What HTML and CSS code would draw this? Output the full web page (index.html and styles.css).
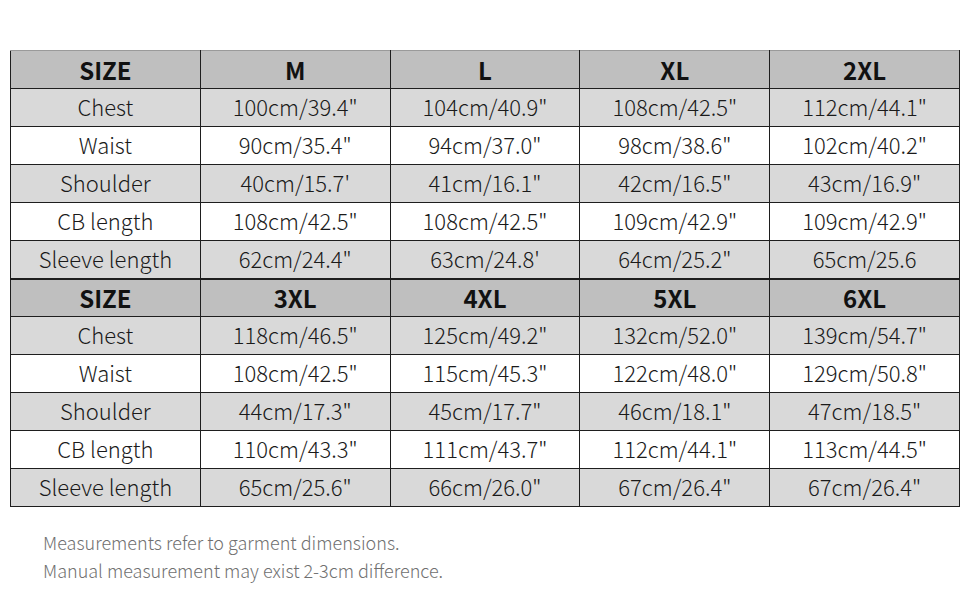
FILE: index.html
```html
<!DOCTYPE html>
<html>
<head>
<meta charset="utf-8">
<link rel="stylesheet" href="styles.css">
</head>
<body>
<div class="page">
<table class="size-table">
<tbody>
<tr class="head"><td>SIZE</td><td>M</td><td>L</td><td>XL</td><td>2XL</td></tr>
<tr class="shade"><td>Chest</td><td>100cm/39.4"</td><td>104cm/40.9"</td><td>108cm/42.5"</td><td>112cm/44.1"</td></tr>
<tr><td>Waist</td><td>90cm/35.4"</td><td>94cm/37.0"</td><td>98cm/38.6"</td><td>102cm/40.2"</td></tr>
<tr class="shade"><td>Shoulder</td><td>40cm/15.7'</td><td>41cm/16.1"</td><td>42cm/16.5"</td><td>43cm/16.9"</td></tr>
<tr><td>CB length</td><td>108cm/42.5"</td><td>108cm/42.5"</td><td>109cm/42.9"</td><td>109cm/42.9"</td></tr>
<tr class="shade last"><td>Sleeve length</td><td>62cm/24.4"</td><td>63cm/24.8'</td><td>64cm/25.2"</td><td>65cm/25.6</td></tr>
<tr class="head"><td>SIZE</td><td>3XL</td><td>4XL</td><td>5XL</td><td>6XL</td></tr>
<tr class="shade"><td>Chest</td><td>118cm/46.5"</td><td>125cm/49.2"</td><td>132cm/52.0"</td><td>139cm/54.7"</td></tr>
<tr><td>Waist</td><td>108cm/42.5"</td><td>115cm/45.3"</td><td>122cm/48.0"</td><td>129cm/50.8"</td></tr>
<tr class="shade"><td>Shoulder</td><td>44cm/17.3"</td><td>45cm/17.7"</td><td>46cm/18.1"</td><td>47cm/18.5"</td></tr>
<tr><td>CB length</td><td>110cm/43.3"</td><td>111cm/43.7"</td><td>112cm/44.1"</td><td>113cm/44.5"</td></tr>
<tr class="shade"><td>Sleeve length</td><td>65cm/25.6"</td><td>66cm/26.0"</td><td>67cm/26.4"</td><td>67cm/26.4"</td></tr>
</tbody>
</table>
<div class="notes">
<p>Measurements refer to garment dimensions.</p>
<p>Manual measurement may exist 2-3cm difference.</p>
</div>
</div>
</body>
</html>
```

FILE: styles.css
```css
html, body {
  margin: 0;
  padding: 0;
  background: #ffffff;
}
.page {
  padding: 50px 10px 0 10px;
  font-family: "Noto Sans CJK SC", "Noto Sans", "Liberation Sans", sans-serif;
}
.size-table {
  width: 950px;
  border-collapse: collapse;
  table-layout: fixed;
}
.size-table tr {
  height: 38px;
}
.size-table td {
  border: 1px solid #1e1e1e;
  padding: 0 0 3px 0;
  text-align: center;
  vertical-align: middle;
  font-size: 22px;
  color: #1a1a1a;
  font-weight: 300;
  line-height: 20px;
}
.size-table tr.head td {
  background: #bfbfbf;
  font-weight: 700;
  font-size: 24px;
  color: #111;
  padding: 1px 0 0 0;
}
.size-table tr.shade td {
  background: #d9d9d9;
}
.size-table tr.last td {
  border-bottom: 2px solid #1e1e1e;
}
.size-table tr:first-child td {
  border-top: 1px solid #9a9a9a;
}
.notes {
  padding: 21px 0 0 33px;
  color: #707070;
  font-size: 18px;
  font-weight: 300;
}
.notes p {
  margin: 0;
  line-height: 28px;
}
```
